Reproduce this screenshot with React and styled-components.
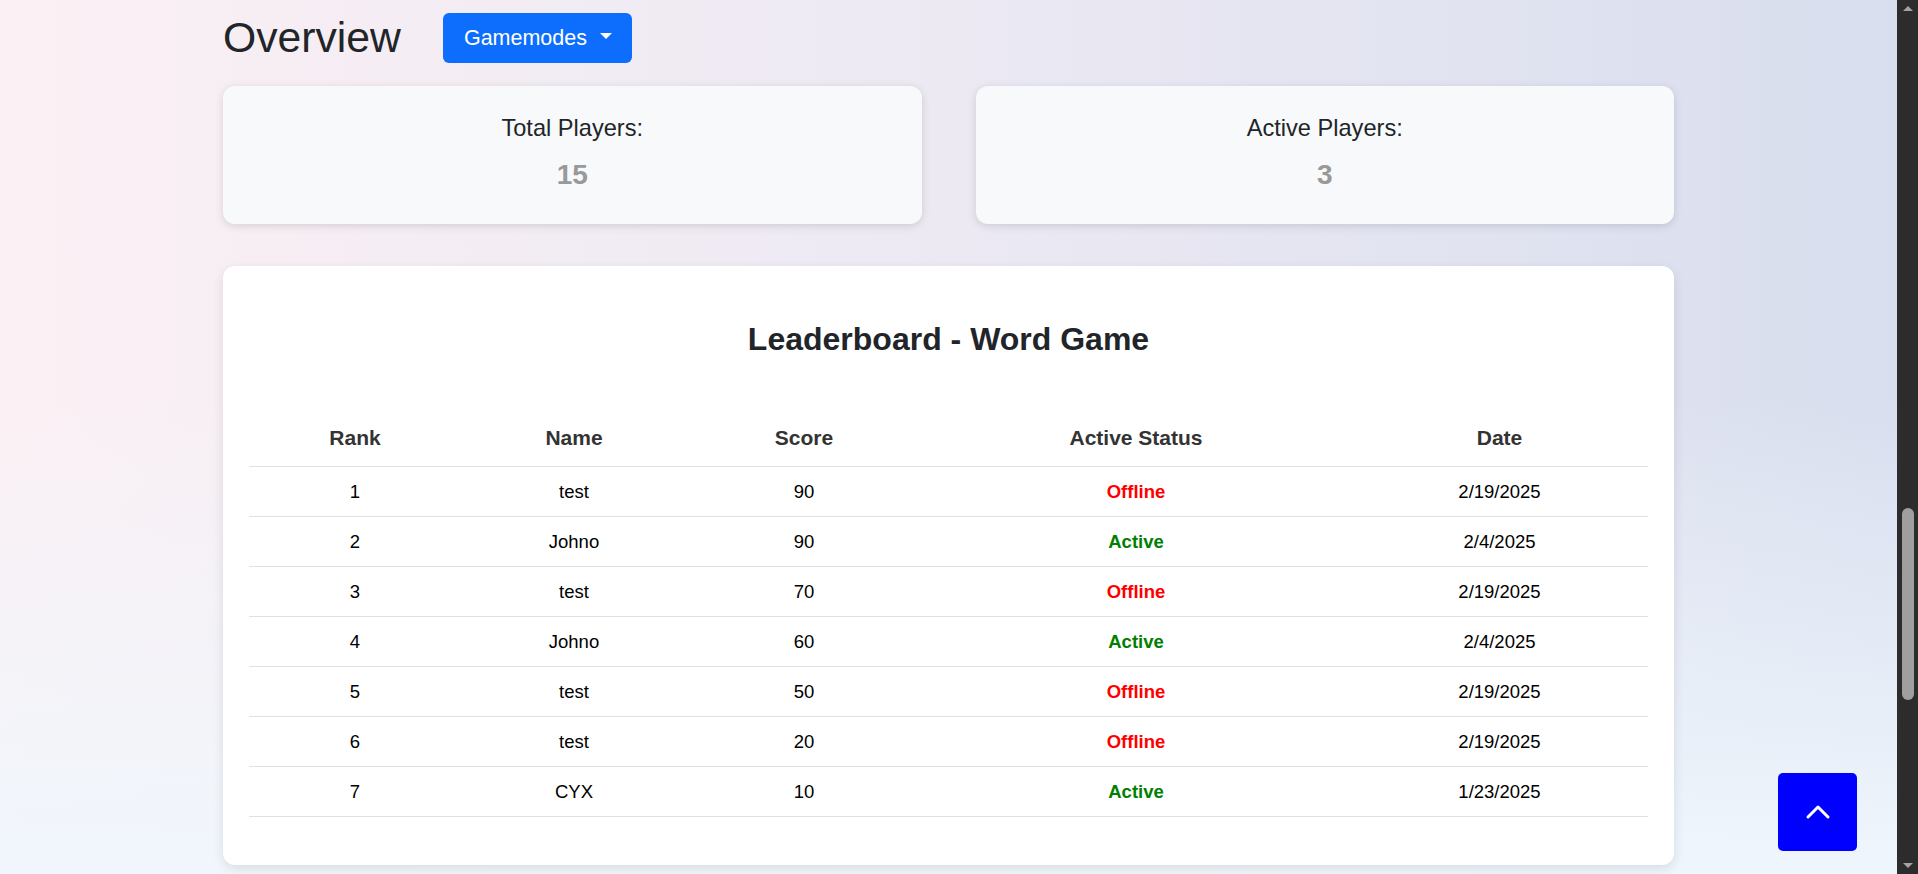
import React from 'react';
import styled, { createGlobalStyle } from 'styled-components';

const players = [
  { rank: 1, name: 'test', score: 90, active: false, date: '2/19/2025' },
  { rank: 2, name: 'Johno', score: 90, active: true, date: '2/4/2025' },
  { rank: 3, name: 'test', score: 70, active: false, date: '2/19/2025' },
  { rank: 4, name: 'Johno', score: 60, active: true, date: '2/4/2025' },
  { rank: 5, name: 'test', score: 50, active: false, date: '2/19/2025' },
  { rank: 6, name: 'test', score: 20, active: false, date: '2/19/2025' },
  { rank: 7, name: 'CYX', score: 10, active: true, date: '1/23/2025' },
];

const columns = [
  { label: 'Rank', width: 212 },
  { label: 'Name', width: 226 },
  { label: 'Score', width: 234 },
  { label: 'Active Status', width: 430 },
  { label: 'Date', width: 297 },
];

const App = () => (
  <>
    <GlobalStyle />
    <Shell>
      <Page>
        <Container>
          <HeaderRow>
            <PageTitle>Overview</PageTitle>
            <DropdownButton>
              Gamemodes
              <Caret />
            </DropdownButton>
          </HeaderRow>

          <StatsGrid>
            <StatCard>
              <StatLabel>Total Players:</StatLabel>
              <StatValue>15</StatValue>
            </StatCard>
            <StatCard>
              <StatLabel>Active Players:</StatLabel>
              <StatValue>3</StatValue>
            </StatCard>
          </StatsGrid>

          <BoardCard>
            <BoardTitle>Leaderboard - Word Game</BoardTitle>
            <Table>
              <colgroup>
                {columns.map((c) => (
                  <col key={c.label} width={c.width} />
                ))}
              </colgroup>
              <thead>
                <tr>
                  {columns.map((c) => (
                    <Th key={c.label}>{c.label}</Th>
                  ))}
                </tr>
              </thead>
              <tbody>
                {players.map((p) => (
                  <tr key={p.rank}>
                    <Td>{p.rank}</Td>
                    <Td>{p.name}</Td>
                    <Td>{p.score}</Td>
                    <Td>
                      <Status $active={p.active}>{p.active ? 'Active' : 'Offline'}</Status>
                    </Td>
                    <Td>{p.date}</Td>
                  </tr>
                ))}
              </tbody>
            </Table>
          </BoardCard>
        </Container>

        <ToTopButton aria-label="Back to top">
          <svg width="26" height="16" viewBox="0 0 26 16">
            <polyline
              points="3,13 13,3 23,13"
              fill="none"
              stroke="#fff"
              strokeWidth="3"
              strokeLinecap="round"
              strokeLinejoin="round"
            />
          </svg>
        </ToTopButton>
      </Page>

      <ScrollTrack>
        <ScrollArrow $dir="up" />
        <ScrollRail>
          <ScrollThumb />
        </ScrollRail>
        <ScrollArrow $dir="down" />
      </ScrollTrack>
    </Shell>
  </>
);

const GlobalStyle = createGlobalStyle`
html, body {
  margin:0;
  height:874px;
  overflow:hidden;
}
body {
  font-family:'Liberation Sans', Arial, sans-serif;
  color:#212529;
}
*, *::before, *::after {
  box-sizing:border-box;
}
`;

const Shell = styled.div`
display:flex;
height:874px;
`;

const Page = styled.main`
flex:1;
padding-top:13px;
background:
  linear-gradient(to top, rgba(240,247,253,0.95) 0%, rgba(240,247,253,0) 55%),
  linear-gradient(to right, #fbf0f4 0%, #ece9f3 50%, #d8deee 100%);
overflow:hidden;
`;

const Container = styled.div`
width:1451px;
margin:0 auto;
`;

const HeaderRow = styled.div`
display:flex;
align-items:center;
gap:42px;
height:50px;
`;

const PageTitle = styled.h1`
margin:0;
font-size:42.7px;
font-weight:400;
line-height:1.2;
color:#212529;
`;

const DropdownButton = styled.button`
display:flex;
align-items:center;
height:50px;
padding:0 20px 0 21px;
border:none;
border-radius:6px;
background:#0d6efd;
color:#fff;
font-family:inherit;
font-size:21.5px;
line-height:1.5;
`;

const Caret = styled.span`
margin-left:13px;
margin-top:-4px;
width:0;
height:0;
border-left:6.5px solid transparent;
border-right:6.5px solid transparent;
border-top:6.5px solid #fff;
`;

const StatsGrid = styled.div`
display:grid;
grid-template-columns:1fr 1fr;
gap:54px;
margin-top:23px;
`;

const StatCard = styled.section`
height:138px;
padding-top:28px;
text-align:center;
background:#f8f9fa;
border-radius:12px;
box-shadow:0 2px 8px rgba(0,0,0,0.13);
`;

const StatLabel = styled.div`
font-size:23.6px;
line-height:1.2;
color:#212529;
`;

const StatValue = styled.div`
margin-top:16px;
font-size:28px;
font-weight:bold;
line-height:1.2;
color:#999;
`;

const BoardCard = styled.section`
margin-top:42px;
padding:26px 26px 27px 26px;
background:#fff;
border-radius:12px;
box-shadow:0 4px 12px rgba(0,0,0,0.1);
`;

const BoardTitle = styled.h2`
margin:28px 0 50.5px;
font-size:32px;
font-weight:bold;
line-height:1.2;
text-align:center;
color:#212529;
`;

const Table = styled.table`
width:100%;
border-collapse:collapse;
table-layout:fixed;
margin-bottom:21px;
`;

const Th = styled.th`
padding:13px 8px;
font-size:21px;
line-height:31px;
font-weight:bold;
color:#333;
text-align:center;
border-bottom:1px solid #dee2e6;
`;

const Td = styled.td`
padding:11px 8px;
font-size:18.5px;
line-height:27px;
color:#000;
text-align:center;
border-bottom:1px solid #dee2e6;
`;

const Status = styled.span`
font-weight:bold;
color:${(p) => (p.$active ? '#008000' : '#ff0000')};
`;

const ToTopButton = styled.button`
position:fixed;
right:61px;
bottom:23px;
width:79px;
height:78px;
display:flex;
align-items:center;
justify-content:center;
border:none;
border-radius:5px;
background:#0000ff;
`;

const ScrollTrack = styled.aside`
width:21px;
flex-shrink:0;
display:flex;
flex-direction:column;
align-items:center;
background:#2c2c2c;
`;

const ScrollArrow = styled.div`
height:17px;
display:flex;
align-items:center;
justify-content:center;
&::before {
  content:'';
  width:0;
  height:0;
  border-left:5px solid transparent;
  border-right:5px solid transparent;
  ${(p) =>
    p.$dir === 'up'
      ? 'border-bottom:5px solid #a3a3a3;'
      : 'border-top:5px solid #a3a3a3;'}
}
`;

const ScrollRail = styled.div`
flex:1;
width:100%;
display:flex;
justify-content:center;
`;

const ScrollThumb = styled.div`
margin-top:491px;
width:12px;
height:192px;
border-radius:6px;
background:#9f9f9f;
`;

export default App;
